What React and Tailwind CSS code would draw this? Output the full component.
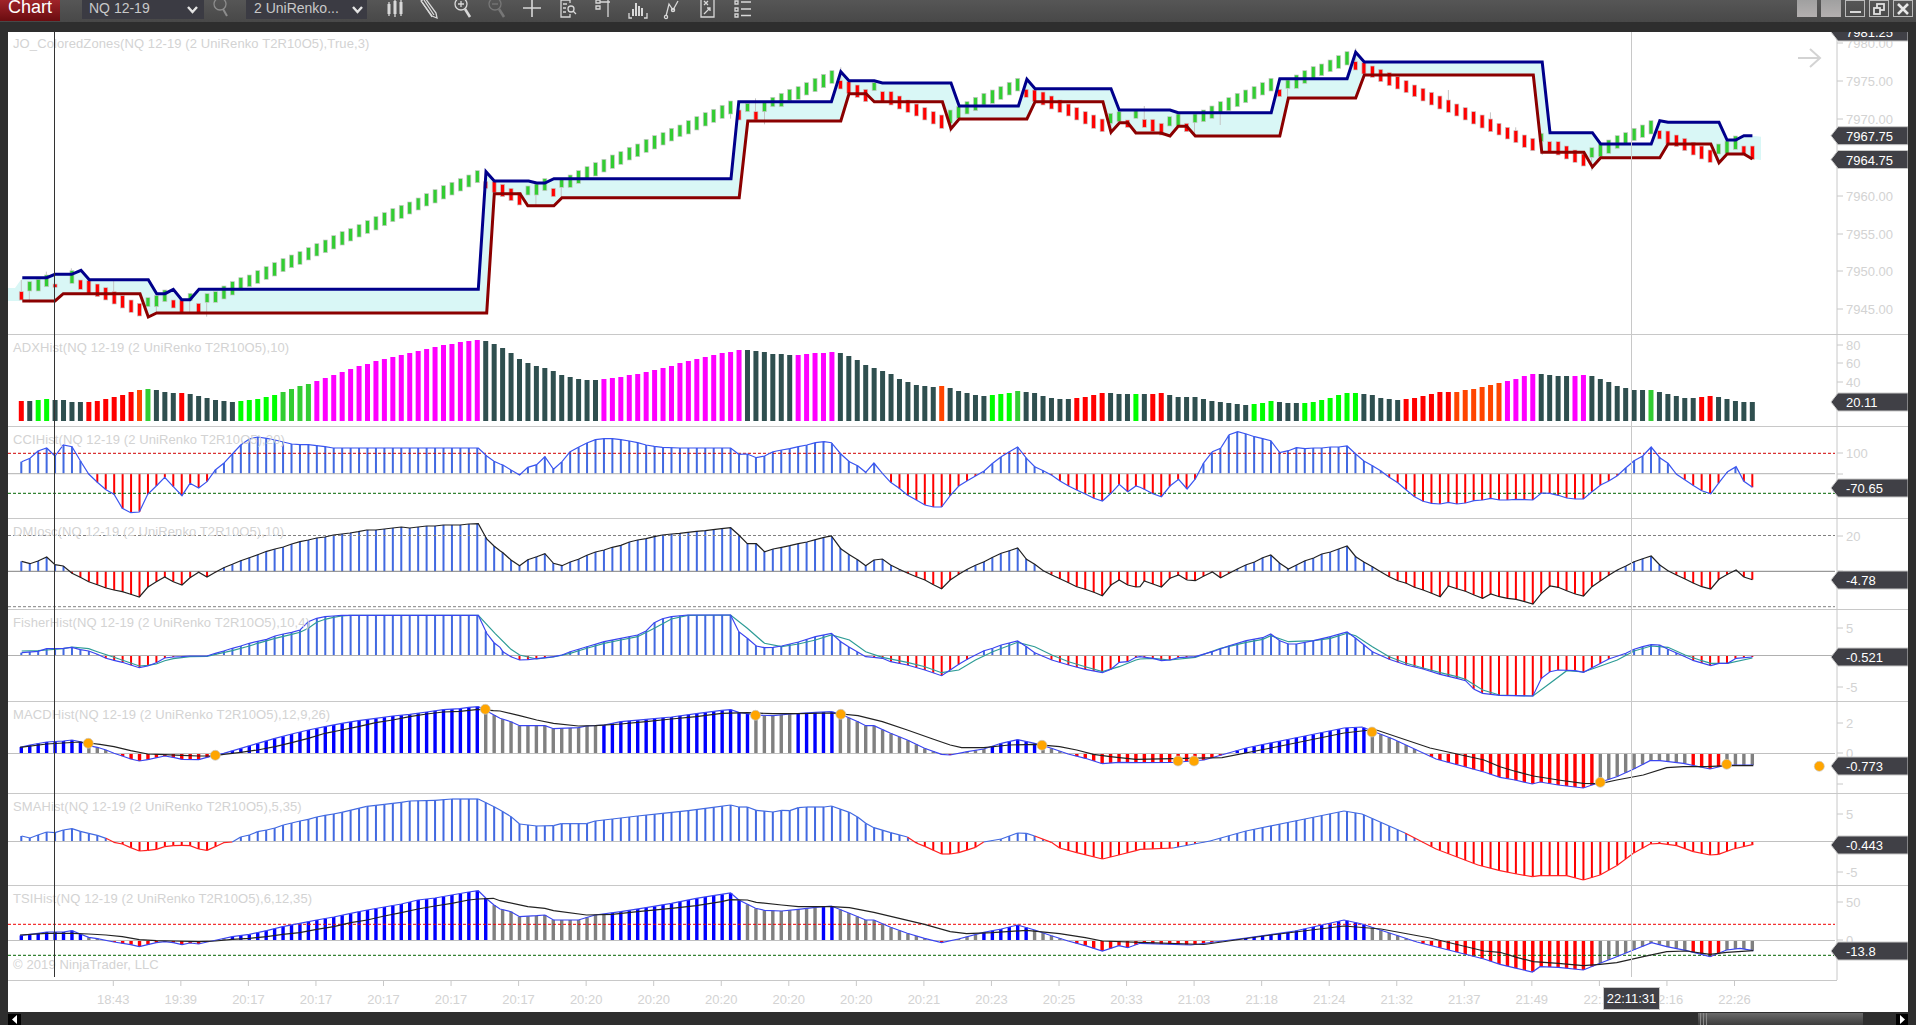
import React from "react";

// crop helpers: the reference crops have different scales, points get converted to page coords
const at = (ox, oy, sx, sy) => (s) =>
  s.trim().split(/\s+/).map((p) => {
    const [x, y] = p.split(",").map(Number);
    return [ox + x / sx, oy + y / sy];
  });
const stitch = (...segs) => {
  const out = [];
  segs.forEach((seg) => {
    seg.forEach((p) => {
      if (!out.length || p[0] > out[out.length - 1][0]) out.push(p);
    });
  });
  return out;
};
const line = (pts) => pts.map((p) => p[0].toFixed(1) + "," + p[1].toFixed(1)).join(" ");
const interp = (pts, x) => {
  if (x <= pts[0][0]) return pts[0][1];
  for (let i = 1; i < pts.length; i++) {
    if (x <= pts[i][0]) {
      const t = (x - pts[i - 1][0]) / (pts[i][0] - pts[i - 1][0]);
      return pts[i - 1][1] + t * (pts[i][1] - pts[i - 1][1]);
    }
  }
  return pts[pts.length - 1][1];
};
const barX = (i) => 21.3 + 8.444 * i;
const barIdx = (x) => Math.round((x - 21.3) / 8.444);
const BARS = Array.from({ length: 206 }, (_, i) => i);

const zA = at(0, 30, 3, 3);
const zB = at(500, 40, 2.45, 3);
const zC = at(1130, 40, 2.45, 3);
const zAdx = at(0, 250, 3, 3);
const zD = at(500, 330, 2.45, 3);
const zE = at(1130, 330, 2.45, 3);
const zDm = at(0, 510, 3, 3);
const zLow = at(0, 690, 3, 3);
const zMid = at(500, 695, 2.45, 3);
const zEnd = at(1500, 700, 3, 3);
const page = at(0, 0, 1, 1);

// main chart
const upper = stitch(
  zA("67,743 140,743 165,733 215,733 243,721 268,749 445,749 470,791 495,791 520,778 545,809 570,809 597,778 1435,778 1458,425 1483,453 1560,453"),
  zB("0,423 70,423 90,429 110,429 132,416 566,416 585,185 812,185 835,95 855,122 917,122 937,129 1105,129 1125,198 1270,198 1291,118 1311,146 1497,146 1517,210 1568,210"),
  zC("0,210 98,210 118,218 346,218 367,116 532,116 553,37 574,66 1010,66 1029,278 1133,278 1153,312 1277,312 1298,242 1318,247 1443,247 1463,300 1484,300 1504,287 1525,287")
);
const lower = stitch(
  zA("67,813 165,813 190,791 420,791 445,861 470,849 1460,849 1483,491 1560,491"),
  zB("0,461 48,461 68,497 132,497 152,473 586,473 607,243 835,243 855,161 897,161 917,185 1084,185 1105,266 1125,237 1291,237 1311,185 1477,185 1497,277 1518,248 1538,248 1558,279 1568,279"),
  zC("0,255 14,279 76,279 98,288 118,259 139,259 160,288 367,288 388,174 553,174 574,105 988,105 1009,337 1112,337 1133,381 1153,353 1298,353 1318,312 1423,312 1443,368 1463,342 1504,342 1525,357")
);
const zone = [[8, 288], [15, 288], ...upper, [1761, 136.7], [1761, 160], ...[...lower].reverse(), [8, 301]];

const parseCandles = (s, ox, oy, sx) =>
  s.trim().split(/\s+/).map((p) => {
    const [x, t, b] = p.slice(1).split(",").map(Number);
    return { i: barIdx(ox + x / sx), up: p[0] === "g", top: oy + t / 3, bot: oy + b / 3 };
  });
const candles = [
  ...parseCandles("r64,785,810 g88,755,783 g113,748,783 g139,735,770 r163,762,772 g214,722,760 r241,750,778 r265,752,790 r292,762,800 r316,773,810 r341,785,822 r367,797,834 r392,810,847 r418,820,858 g443,803,830 g469,797,830 g493,780,815 r520,810,834 r545,810,849 g569,790,812 r595,820,848 g620,791,817 g646,785,817 g671,768,807 g697,755,795 g722,743,780 g748,735,770 g773,722,760 g797,710,748 g823,698,738 g848,686,725 g874,675,713 g899,665,703 g925,653,690 g950,641,678 g976,630,668 g1001,617,657 g1025,605,645 g1052,596,633 g1075,584,621 g1102,572,610 g1127,560,600 g1153,548,587 g1178,536,575 g1204,526,565 g1229,516,552 g1254,504,540 g1280,491,528 g1303,479,519 g1330,467,507 g1355,457,495 g1381,446,483 g1406,435,471 g1432,422,458 r1458,455,475 r1481,455,487 r1507,463,500 r1531,475,512 r1557,488,525", 0, 30, 3),
  ...parseCandles("g65,438,465 g88,432,465 g108,416,452 r130,445,470 g150,418,442 g170,405,442 g192,392,430 g212,380,418 g233,368,408 g253,358,396 g275,345,385 g295,335,373 g317,322,360 g337,312,350 g357,298,337 g378,287,327 g398,278,315 g419,265,303 g440,255,290 g461,242,282 g481,230,270 g503,218,258 g522,208,247 g543,196,235 g564,183,222 r584,210,240 g606,190,215 r626,215,240 g648,187,215 g668,172,200 g690,160,200 g710,148,182 g730,140,178 g751,128,165 g771,115,155 g792,103,143 g812,92,130 r835,122,147 r855,125,160 r876,135,172 r897,148,185 g915,128,152 r937,155,187 r957,155,195 r978,168,207 r998,180,217 r1020,192,228 r1040,203,240 r1062,215,252 r1082,225,265 g1103,210,250 g1123,200,235 g1143,185,222 g1164,172,212 g1185,160,195 g1206,150,190 g1228,140,178 g1248,127,165 g1268,115,153 r1290,148,172 r1310,150,185 r1330,156,195 r1351,168,207 r1371,180,217 r1392,192,228 r1413,203,240 r1434,215,252 r1454,225,265 r1475,237,275 g1495,220,250 g1516,215,245 r1537,240,262", 500, 40, 2.45),
  ...parseCandles("g14,212,235 r35,238,262 r55,238,275 r76,250,285 g97,230,258 g118,222,258 r139,250,275 g158,222,248 g180,210,245 g200,198,235 g222,185,218 g241,173,212 g263,160,200 g283,150,188 g305,140,177 g325,128,165 g345,115,153 r366,148,170 g386,120,145 g407,105,145 g428,92,130 g449,80,115 g469,72,107 g491,60,95 g511,47,85 g531,35,75 r552,65,90 r573,68,102 r594,78,112 r614,88,125 r635,98,137 r655,110,147 r677,122,158 r697,135,170 r717,145,183 r738,157,195 r759,168,207 r780,180,217 r800,192,228 r821,203,240 r842,215,252 r863,225,264 r883,237,275 r903,250,285 r925,262,297 r945,272,308 r966,285,322 r986,295,332 g1008,280,305 r1028,305,335 r1049,305,345 r1069,318,357 r1089,330,367 r1110,342,378 g1131,323,352 g1152,312,350 g1172,300,340 g1193,287,325 g1214,278,312 g1235,265,302 g1255,255,292 g1275,242,282 r1297,272,297 r1317,273,312 r1338,285,320 r1358,295,332 r1380,307,345 r1400,318,357 r1421,330,367 g1441,312,342 g1462,303,340 g1483,288,328 r1504,318,345 r1525,318,358", 1130, 40, 2.45),
];
const wicks = [
  ...at(0, 30, 3, 3)("64,750 64,785 88,783 88,817 139,735 139,725 214,722 214,715 469,830 469,848 569,812 569,852 620,817 620,860 341,750 341,785"),
  ...at(500, 40, 2.45, 3)("88,465 88,495 150,442 150,473 648,215 648,253 626,175 626,215 1103,250 1103,278 835,82 835,122 1497,250 1497,287 565,222 565,236"),
  ...at(1130, 40, 2.45, 3)("35,198 35,238 221,218 221,255 780,150 780,180 883,217 883,237 158,248 158,288 386,145 386,170 1010,305 1010,345 553,25 553,65 1131,352 1131,392 945,262 945,272"),
];

// ADX bars
const ADX_COLORS = { r: "#ff0000", d: "#2f4f4f", l: "#00ff00", g: "#32cd32", m: "#ff00ff", o: "#ff4500" };
const parseAdx = (s, ox, oy, sx) =>
  s.trim().split(/\s+/).map((p) => {
    const [x, t] = p.slice(1).split(",").map(Number);
    return { i: barIdx(ox + x / sx), c: ADX_COLORS[p[0]], top: oy + t / 3 };
  });
const adx = [
  ...parseAdx("r64,453 d88,453 l113,450 l139,447 d163,450 d190,450 d214,456 d241,456 r265,456 r292,453 r316,447 r341,441 r367,435 r392,426 o418,420 g443,417 d469,420 d493,426 d520,429 r545,429 d569,432 d595,438 d620,444 d646,450 d671,453 d697,456 l722,453 l748,450 l773,447 l797,441 l823,435 g848,426 g874,417 g899,408 g925,402 m950,393 m976,384 m1001,375 m1025,366 m1052,357 m1075,348 m1102,342 m1127,333 m1153,327 m1178,321 m1204,315 m1229,309 m1254,303 m1280,297 m1303,291 m1330,285 m1355,282 m1381,276 m1406,273 m1432,270 d1456,273 d1481,282 d1507,294 d1531,309 d1557,327", 0, 250, 3),
  ...parseAdx("d67,99 d89,108 d109,114 d131,123 d151,135 d170,141 d192,147 d212,150 d233,150 m253,147 m275,144 m295,141 m317,135 m337,132 m357,126 m378,120 m398,114 m420,108 m440,99 m461,93 m481,87 m503,81 m522,75 m543,69 m565,66 m584,60 d606,60 d626,63 d648,66 d669,72 d690,72 d710,75 m730,75 m751,72 m771,69 m792,69 m812,66 d835,69 d855,78 d876,90 d896,105 d915,114 d937,123 d957,132 d978,147 d998,156 d1020,165 d1040,168 d1062,171 o1082,168 d1103,174 d1123,183 d1143,189 d1164,195 d1185,198 l1206,195 l1226,192 l1248,189 g1268,183 d1290,186 d1310,189 d1330,198 d1351,204 d1371,207 d1392,207 r1412,204 r1434,201 r1454,195 r1476,189 d1496,189 d1516,192 d1537,192 l1558,192", 500, 330, 2.45),
  ...parseAdx("d35,192 r55,192 r77,189 d97,195 d119,201 d139,201 d158,201 d180,207 d200,213 d222,216 d241,219 d263,222 d283,225 l305,222 l324,219 l344,213 d366,216 d386,219 d407,219 l428,219 l449,216 l469,210 l491,204 l511,195 l531,189 l552,189 d572,192 d594,195 d614,204 d636,207 d655,210 r677,207 r697,204 r717,198 r739,192 r759,186 r780,186 o800,186 o822,180 o842,177 o863,171 o883,165 o903,159 m925,153 m945,147 m966,138 m986,132 d1008,132 d1028,135 d1050,138 d1069,138 m1089,138 m1111,135 d1131,138 d1153,147 d1172,156 d1194,168 d1214,174 d1236,180 d1255,180 g1275,180 d1297,186 d1317,192 d1338,198 d1358,204 d1380,204 r1400,201 r1422,198 d1442,201 d1461,207 d1483,213 d1503,216 d1525,216", 1130, 330, 2.45),
];

const cci = stitch(
  zAdx("65,635 90,625 114,603 140,594 165,618 190,585 216,590 241,632 266,672 292,697 318,719 342,733 367,775 392,788 418,786 443,733 469,708 494,682 520,710 546,737 570,700 596,714 621,695 646,660 671,640 697,612 722,585 748,567 773,561 800,565 825,570 850,576 875,582 900,584 925,584 950,587 975,590 1000,594 1435,594 1460,618 1482,634 1500,642"),
  zD("7,405 27,420 48,435 68,412 90,404 110,380 131,418 152,395 172,365 192,352 213,339 234,329 255,326 275,326 296,329 317,333 337,338 358,345 378,349 398,352 440,354 565,354 585,373 606,372 628,383 648,378 669,365 690,360 710,356 731,350 752,345 773,338 794,335 812,338 835,372 856,395 877,408 896,427 916,399 937,430 957,457 978,475 998,495 1020,510 1041,525 1062,531 1082,531 1103,497 1124,468 1145,452 1165,438 1186,423 1207,400 1228,380 1248,365 1268,351 1290,385 1310,410 1331,422 1352,436 1372,453 1393,468 1413,480 1434,492 1455,505 1476,513 1497,490 1517,463 1538,485 1558,468 1568,472"),
  zE("35,478 56,491 77,500 98,468 119,448 140,477 160,447 181,398 202,365 222,355 243,314 264,305 285,312 305,320 325,326 345,332 367,368 388,362 408,353 429,356 450,354 470,354 491,351 511,351 532,348 553,372 573,393 594,407 614,422 635,442 656,458 677,480 697,500 718,514 739,520 760,522 780,517 801,522 822,519 843,512 864,510 884,505 905,510 925,510 946,508 967,509 987,510 1008,489 1029,490 1049,496 1070,504 1091,507 1111,507 1132,485 1153,465 1173,453 1194,437 1215,413 1235,392 1256,378 1277,351 1298,383 1318,400 1339,433 1360,450 1381,467 1401,482 1423,491 1443,458 1464,425 1485,410 1504,454 1525,472")
);
const dm = stitch(
  zDm("65,154 90,161 114,153 140,141 165,164 190,168 216,190 241,202 266,215 292,224 318,234 342,240 367,245 392,253 418,261 443,232 469,215 494,201 520,215 546,225 570,203 596,187 621,201 646,187 671,173 697,163 722,152 748,143 773,134 800,124 825,117 850,111 875,102 900,95 925,90 950,84 975,81 1000,75 1025,72 1050,69 1075,65 1100,60 1127,60 1153,57 1178,54 1204,51 1229,54 1254,51 1280,48 1305,48 1330,45 1380,45 1406,42 1435,41 1460,87 1482,108 1500,122"),
  zD("7,668 27,690 48,707 68,689 90,680 110,671 131,700 152,707 172,696 192,688 213,676 234,666 255,660 275,652 296,646 317,636 337,630 358,626 378,620 398,615 420,612 440,610 460,607 481,604 503,602 522,599 543,596 565,593 585,615 606,641 628,641 648,665 669,657 690,652 710,647 731,641 752,636 773,629 794,622 812,618 835,656 856,674 877,690 896,707 916,690 937,687 957,705 978,718 998,729 1020,740 1041,750 1062,764 1082,776 1103,750 1124,733 1145,718 1165,706 1186,695 1207,682 1228,670 1248,662 1268,654 1290,688 1310,703 1331,722 1352,735 1372,746 1393,758 1413,770 1434,778 1455,787 1476,797 1497,765 1517,750 1538,765 1558,771 1568,770"),
  zE("35,753 56,762 77,771 98,745 119,735 140,750 160,752 181,738 202,726 222,743 243,730 264,716 285,704 305,696 325,683 345,675 367,700 388,717 408,705 429,692 450,684 470,672 491,666 511,657 532,648 553,680 573,696 594,710 614,725 635,740 656,752 677,760 697,772 718,780 739,790 760,800 780,768 801,776 822,784 843,795 864,805 884,792 905,800 925,805 946,808 967,815 987,822 1008,790 1029,768 1049,772 1070,782 1091,792 1111,798 1132,770 1153,752 1173,736 1194,720 1215,708 1235,695 1256,686 1277,678 1298,705 1318,722 1339,735 1360,747 1381,760 1401,770 1423,777 1443,748 1464,733 1485,720 1504,741 1525,749")
);
const fisher = stitch(
  zDm("65,428 114,424 140,416 190,415 216,412 241,419 266,423 292,433 318,445 342,451 367,457 392,465 418,473 443,468 469,458 494,444 520,441 546,440 570,438 596,438 621,438 646,430 671,423 697,415 722,408 748,400 773,394 800,388 825,378 850,372 875,367 900,360 925,335 950,325 975,320 1000,318 1025,316 1435,316 1460,370 1482,398 1500,412"),
  zD("7,965 27,980 48,990 68,989 90,986 131,980 152,975 172,965 213,950 255,935 296,925 337,915 358,903 378,878 398,866 420,860 460,855 565,855 585,905 606,925 628,948 648,953 669,952 690,948 731,936 773,920 812,910 835,935 856,952 877,967 896,980 916,982 937,985 957,995 998,1005 1041,1020 1082,1037 1103,1020 1124,1003 1145,988 1165,975 1186,962 1207,955 1228,945 1268,933 1290,950 1310,968 1352,990 1393,1005 1434,1018 1476,1028 1497,1018 1517,997 1538,995 1558,982 1568,980"),
  zE("56,985 77,992 98,990 119,983 160,980 202,965 243,947 285,932 325,923 345,912 367,932 388,942 408,942 450,932 491,920 532,906 553,925 594,965 635,988 677,1005 718,1017 760,1033 801,1045 822,1052 843,1078 864,1090 905,1096 987,1098 1008,1045 1029,1025 1049,1020 1091,1022 1111,1027 1153,1000 1173,987 1215,970 1235,958 1256,950 1277,944 1298,945 1318,958 1360,980 1381,992 1423,1007 1443,1000 1464,1000 1485,985 1525,981")
);
const fisherSig = stitch(
  zDm("65,423 114,422 140,420 190,416 216,411 266,416 292,425 342,442 392,459 418,468 443,466 469,462 494,452 520,446 570,440 621,439 646,433 697,422 748,408 773,400 825,385 875,373 900,367 925,355 950,337 975,328 1000,322 1025,318 1050,316 1435,316 1485,370"),
  zD("27,958 48,975 90,987 131,981 172,970 213,955 255,940 296,930 337,920 378,895 420,867 460,856 565,855 606,895 648,940 690,950 731,942 773,930 812,915 856,930 896,965 937,982 998,997 1041,1010 1082,1028 1124,1020 1165,990 1207,965 1268,937 1310,950 1352,975 1393,995 1434,1010 1476,1025 1517,1010 1558,990 1568,987"),
  zE("56,985 98,990 160,982 222,955 285,937 325,928 345,917 388,935 450,932 491,925 532,910 553,917 594,950 635,980 677,1000 718,1014 760,1028 801,1040 822,1048 864,1080 905,1095 987,1098 1029,1060 1070,1022 1111,1026 1153,1008 1194,990 1235,963 1277,948 1318,952 1360,975 1401,992 1423,1000 1464,1000 1525,984")
);
const macd = stitch(
  zLow("60,172 90,165 140,156 190,153 216,150 241,155 266,167 292,172 318,180 342,190 367,198 392,207 418,213 443,209 494,198 520,202 546,208 596,209 640,197 671,190 722,175 773,160 825,145 875,132 925,120 975,110 1025,100 1075,92 1127,85 1178,78 1229,73 1280,66 1330,59 1380,56 1406,52 1435,50 1455,60 1482,75 1500,85"),
  zMid("27,80 48,92 110,92 131,101 192,98 212,93 255,90 296,80 358,73 420,66 481,56 543,46 565,44 585,52 626,60 669,62 712,57 773,52 812,50 835,58 877,80 896,92 916,92 957,115 998,135 1040,160 1082,178 1103,180 1145,170 1185,162 1228,145 1268,134 1310,145 1351,160 1392,177 1434,190 1476,206 1516,202 1558,203"),
  page("1173,762.5 1204,760 1246,748 1295,738 1344,728 1362,727 1393,739 1436,759 1484,772"),
  zEnd("0,232 45,240 97,252 120,246 175,255 250,264 300,247 350,230 400,208 450,182 480,182 550,190 630,207 680,195 760,195")
);
const macdSig = stitch(
  zLow("60,172 140,162 190,159 240,156 266,159 300,163 342,170 392,182 443,192 494,194 546,196 596,198 640,198 671,193 722,187 773,180 825,170 875,158 925,145 975,130 1025,120 1075,110 1127,98 1178,90 1229,80 1280,72 1330,66 1380,64 1435,58 1480,62"),
  zMid("0,48 48,62 90,75 131,85 192,93 233,92 296,87 358,80 420,72 481,65 543,55 606,53 669,56 731,56 812,54 877,62 937,80 998,105 1062,133 1103,150 1131,158 1185,158 1248,150 1310,148 1371,155 1413,165 1454,178 1495,185 1558,193"),
  page("1222,757.6 1271,748 1344,733 1375,729.5 1430,748 1484,760"),
  zEnd("0,200 50,215 100,228 175,240 250,250 300,251 350,240 430,225 500,203 550,200 620,200 680,197 760,197")
);
const sma = stitch(
  zLow("65,438 90,444 114,435 140,426 165,428 190,420 216,416 241,424 266,430 292,436 318,445 342,457 367,462 392,473 418,483 443,481 469,478 494,470 520,467 546,466 570,467 596,477 621,481 646,470 671,458 697,456 722,441 748,435 773,425 800,420 825,414 850,405 875,399 900,393 925,388 950,381 975,376 1000,372 1025,367 1050,361 1075,355 1100,349 1127,346 1153,343 1178,340 1204,337 1229,333 1305,331 1355,327 1435,327 1458,338 1482,350 1500,360"),
  zMid("27,365 48,387 90,393 131,392 150,386 212,386 233,378 275,372 337,363 398,355 461,347 522,337 565,330 585,336 606,336 628,346 669,351 690,346 710,347 731,338 752,336 794,336 812,333 856,352 877,367 896,385 916,398 957,413 998,426 1020,444 1041,454 1082,477 1103,477 1124,473 1165,457 1185,441 1228,432 1268,414 1290,415 1310,423 1351,442 1371,459 1413,473 1476,492 1516,480 1558,467 1568,463"),
  page("1173,848 1210,841 1246,831 1295,821 1344,811 1362,814 1405,833 1436,849 1478,865"),
  zEnd("0,512 50,522 97,530 120,527 200,527 250,540 300,525 350,497 400,460 450,432 480,430 530,437 580,455 630,465 655,463 700,447 760,433")
);
const tsi = stitch(
  zLow("60,737 114,730 140,726 190,726 216,722 241,732 266,742 292,746 342,756 392,764 418,770 443,764 469,758 494,755 520,758 546,764 570,759 596,762 621,756 650,750 697,740 748,733 800,722 848,710 899,700 950,690 1001,681 1052,670 1102,660 1153,651 1204,642 1254,630 1305,624 1355,615 1406,606 1435,602 1458,625 1482,645 1500,657"),
  zMid("27,650 48,665 90,662 110,660 131,675 192,675 233,660 296,650 358,638 420,625 481,610 522,602 565,594 585,615 626,640 648,646 690,648 731,643 773,637 812,633 856,655 896,675 916,675 957,697 998,715 1040,730 1082,743 1123,732 1185,712 1228,702 1268,690 1310,705 1351,722 1392,738 1434,752 1476,768 1516,752 1538,758 1568,745"),
  page("1191,945 1246,938 1295,931 1344,920 1362,924 1417,942 1484,959"),
  zEnd("0,793 50,805 97,816 120,800 175,802 250,810 300,790 350,770 400,750 455,728 500,740 560,752 630,770 680,750 720,745 760,752")
);
const tsiSig = stitch(
  zLow("60,735 140,730 216,730 266,732 318,735 367,740 418,749 469,752 520,753 596,755 646,753 697,748 748,745 800,740 848,733 899,728 950,718 1001,710 1052,698 1102,690 1153,678 1204,668 1254,657 1305,648 1355,640 1406,630 1435,627 1480,625"),
  zMid("0,617 68,635 110,640 131,647 212,660 275,658 337,650 420,640 481,632 543,620 564,614 606,615 628,622 690,630 731,635 812,635 856,638 916,652 978,670 1040,688 1103,710 1143,716 1206,713 1290,706 1371,716 1434,728 1476,738 1568,742"),
  page("1204,944.5 1271,935 1344,926 1381,929 1430,938 1484,951"),
  zEnd("0,757 50,772 100,785 175,790 250,797 300,793 350,788 430,770 500,755 560,753 630,763 680,757 760,752")
);

const inRange = (i, ranges) => ranges.some(([a, b]) => i >= a && i <= b);
const GRAY_NEG = [[187, 197], [202, 205]];
const macdColor = (blue) => (i, y, base) => {
  if (y > base) return inRange(i, GRAY_NEG) ? "#808080" : "#ff0000";
  return inRange(i, blue) ? "#0000ff" : "#808080";
};
const plainColor = (i, y, base) => (y > base ? "#ff0000" : "#4169e1");

const macdDots = [[88.3, 743.3], [215.3, 755.3], [485.3, 709.3], [755.5, 715.3], [840.8, 714.3], [1042, 745.3], [1178, 761], [1194, 761], [1372, 732], [1600.3, 782.3], [1726.7, 764.3], [1819.3, 766.3]];

function Hist({ pts, base, w, color }) {
  return (
    <>
      {BARS.map((i) => {
        const x = barX(i);
        const y = interp(pts, x);
        return (
          <rect
            key={i}
            x={x - w / 2}
            y={Math.min(y, base)}
            width={w}
            height={Math.abs(y - base)}
            fill={color(i, y, base)}
          />
        );
      })}
    </>
  );
}

function Poly({ pts, color, width = 1.2 }) {
  return <polyline points={line(pts)} fill="none" stroke={color} strokeWidth={width} strokeLinejoin="miter" />;
}

function HLine({ y, color, dash }) {
  return <line x1="8" x2="1835" y1={y} y2={y} stroke={color} strokeWidth="1" strokeDasharray={dash ? "3 2" : undefined} />;
}

// right hand scale: ticks, labels and the dark price flags
function Scale({ top, bottom, ticks, flags }) {
  return (
    <>
      <line x1="1837" x2="1837" y1={top} y2={bottom} stroke="#c8c8c8" />
      {ticks.map(([y, label]) => (
        <g key={y}>
          <line x1="1837" x2="1843" y1={y} y2={y} stroke="#c8c8c8" />
          {label && (
            <text x="1846" y={y + 5} fontSize="13" fill="#d3d3d3">
              {label}
            </text>
          )}
        </g>
      ))}
      {flags.map(([y, label]) => (
        <g key={label}>
          <polygon
            points={`1831,${y} 1838,${y - 9} 1908,${y - 9} 1908,${y + 9} 1838,${y + 9}`}
            fill="#404046"
            stroke="#c8c8c8"
          />
          <text x="1846" y={y + 5} fontSize="13" fill="#ffffff">
            {label}
          </text>
        </g>
      ))}
    </>
  );
}

function Panel({ className, top, height, title, ticks, flags, children }) {
  return (
    <div className={"relative border-t border-[#c8c8c8] " + className}>
      <svg className="block" width="1900" height={height - 1} viewBox={`8 ${top + 1} 1900 ${height - 1}`}>
        {children}
        <Scale top={top + 1} bottom={top + height} ticks={ticks} flags={flags} />
      </svg>
      <span className="absolute left-[5px] top-[5px] text-[13px] leading-[15px] tracking-[0.1px] text-[#d3d3d3]">{title}</span>
    </div>
  );
}

const ic = { fill: "none", stroke: "#d8d8d8", strokeWidth: 1.3 };
function Icon({ x, children }) {
  return (
    <svg className={"shrink-0 " + x} width="20" height="20" viewBox="0 0 20 20" {...ic}>
      {children}
    </svg>
  );
}

const timeLabels = ["18:43", "19:39", "20:17", "20:17", "20:17", "20:17", "20:17", "20:20", "20:20", "20:20", "20:20", "20:20", "20:21", "20:23", "20:25", "20:33", "21:03", "21:18", "21:24", "21:32", "21:37", "21:49", "22:11", "22:16", "22:26"];

export default function App() {
  return (
    <div className="flex h-[1025px] w-[1916px] flex-col overflow-hidden bg-[#2e2e2e] [font-family:'Liberation_Sans',Arial,sans-serif]">
      {/* toolbar */}
      <div className="flex h-[22px] shrink-0 items-start overflow-hidden bg-gradient-to-b from-[#565656] to-[#484848]">
        <div className="h-[21px] w-[60px] shrink-0 bg-gradient-to-b from-[#a0242a] to-[#6a0c10] pl-[8px] text-[18px] leading-[15px] text-white">
          Chart
        </div>
        <div className="ml-[22px] flex h-[19px] w-[122px] shrink-0 items-center justify-between bg-[#3b3b43] pl-[7px] pr-[6px] text-[14px] leading-[15px] text-[#c8c8c8]">
          <span className="-mt-[2px]">NQ 12-19</span>
          <svg width="11" height="8" viewBox="0 0 11 8" fill="none" stroke="#e4e4e4" strokeWidth="2.4"><path d="M1 1l4.5 5L10 1" /></svg>
        </div>
        <svg className="ml-[8px] shrink-0" width="18" height="18" viewBox="0 0 18 18" fill="none" stroke="#8c8c8c" strokeWidth="1.3">
          <circle cx="8" cy="4" r="6" />
          <path d="M11 9l4 7" strokeWidth="2" />
        </svg>
        <div className="ml-[16px] flex h-[19px] w-[121px] shrink-0 items-center justify-between bg-[#3b3b43] pl-[8px] pr-[4px] text-[14px] leading-[15px] text-[#c8c8c8]">
          <span className="-mt-[2px]">2 UniRenko...</span>
          <svg width="11" height="8" viewBox="0 0 11 8" fill="none" stroke="#e4e4e4" strokeWidth="2.4"><path d="M1 1l4.5 5L10 1" /></svg>
        </div>
        <Icon x="ml-[18px]">
          <path d="M4 2v14M10 0v17M16 0v16" />
          <rect x="2.5" y="4" width="3" height="10" fill="#d8d8d8" stroke="none" />
          <rect x="8.5" y="1" width="3" height="13" fill="#d8d8d8" stroke="none" />
          <rect x="14.5" y="2" width="3" height="12" fill="#d8d8d8" stroke="none" />
        </Icon>
        <Icon x="ml-[13px]">
          <path d="M3 1l4-3 11 15 1 5-5-2z" />
          <path d="M6 0l10 15M4 2l10 15" />
        </Icon>
        <Icon x="ml-[15px]">
          <circle cx="8" cy="4" r="6" />
          <path d="M5 4h6M8 1v6" />
          <path d="M12 9l5 8" strokeWidth="2.6" />
        </Icon>
        <Icon x="ml-[14px]">
          <g stroke="#777">
            <circle cx="8" cy="4" r="6" />
            <path d="M5 4h6" />
            <path d="M12 9l5 8" strokeWidth="2.6" />
          </g>
        </Icon>
        <Icon x="ml-[15px]">
          <path d="M10 0v17M1 8h18" strokeWidth="1.6" />
        </Icon>
        <Icon x="ml-[16px]">
          <path d="M3 0h9v3M12 14v3H3V0M5 4h4M5 8h3M5 12h3" />
          <circle cx="13" cy="9" r="3" />
          <path d="M15 11l3 3" />
        </Icon>
        <Icon x="ml-[16px]">
          <path d="M2 0h4v3H2zM2 6h4v3H2zM6 2h10M14 0v17" />
        </Icon>
        <Icon x="ml-[14px]">
          <path d="M5 16V9M8 16V3M11 16V6M14 16V8" strokeWidth="2" />
          <path d="M1 13v5h3M19 13v5h-3" />
        </Icon>
        <Icon x="ml-[14px]">
          <path d="M4 16L7 4l4 6 5-9" />
          <circle cx="4" cy="17" r="1.6" />
          <circle cx="11" cy="10" r="1.6" />
        </Icon>
        <Icon x="ml-[16px]">
          <path d="M3 0v17h13V0" />
          <path d="M6 1l4 4M10 1L6 5M6 14l6-6M9 8h3v3" />
        </Icon>
        <Icon x="ml-[15px]">
          <path d="M2 1h3v3H2zM2 8h3v3H2zM2 14h3v3H2zM8 9h10M8 15.500h10M8 2h10" />
        </Icon>
        <div className="ml-auto flex shrink-0 items-start">
          <div className="h-[17px] w-[20px] bg-gradient-to-b from-[#a0a0a0] to-[#b4b0b0]" />
          <div className="ml-[4px] h-[17px] w-[20px] bg-gradient-to-b from-[#a0a0a0] to-[#b4b0b0]" />
          <div className="ml-[4px] flex h-[17px] w-[20px] items-end justify-center border border-[#bbb] pb-[3px]">
            <div className="h-[2px] w-[11px] bg-[#d8d8d8]" />
          </div>
          <div className="ml-[4px] flex h-[17px] w-[20px] items-center justify-center border border-[#bbb]">
            <svg width="12" height="12" viewBox="0 0 12 12" fill="none" stroke="#e0e0e0" strokeWidth="1.8">
              <rect x="4" y="1" width="7" height="6" />
              <rect x="1" y="5" width="6" height="6" fill="#4a4a4a" />
            </svg>
          </div>
          <div className="ml-[4px] mr-[3px] flex h-[17px] w-[20px] items-center justify-center border border-[#bbb]">
            <svg width="12" height="12" viewBox="0 0 12 12" fill="none" stroke="#e8e8e8" strokeWidth="2.6">
              <path d="M1 1l10 10M11 1L1 11" />
            </svg>
          </div>
        </div>
      </div>

      <div className="h-[10px] shrink-0 bg-[#2e2e2e]" />

      {/* chart area */}
      <div className="relative ml-[8px] w-[1900px] shrink-0 bg-white">
        <div className="relative h-[302px]">
          <svg className="block" width="1900" height="302" viewBox="8 32 1900 302">
            <polygon points={line(zone)} fill="#d9f7f6" />
            {wicks.map((p, k) =>
              k % 2 === 0 ? (
                <line key={k} x1={p[0]} x2={p[0]} y1={p[1]} y2={wicks[k + 1][1]} stroke="#c4c4c4" />
              ) : null
            )}
            {candles.map((c, k) => (
              <rect
                key={k}
                x={barX(c.i) - 2}
                y={c.top}
                width="4"
                height={c.bot - c.top}
                fill={c.up ? "#32cd32" : "#ff0000"}
                stroke="#c8c8c8"
                strokeWidth="0.7"
              />
            ))}
            <Poly pts={lower} color="#8b0000" width={3} />
            <Poly pts={upper} color="#00008b" width={3} />
            <path d="M1798 58h22M1810 49l10 9-10 9" fill="none" stroke="#d3d3d3" strokeWidth="2" />
            <Scale
              top={32}
              bottom={334}
              ticks={[[43, "7980.00"], [81, "7975.00"], [119, "7970.00"], [158, null], [196, "7960.00"], [234, "7955.00"], [271, "7950.00"], [309, "7945.00"]]}
              flags={[[32, "7981.25"], [135.7, "7967.75"], [159.5, "7964.75"]]}
            />
          </svg>
          <span className="absolute left-[5px] top-[4px] text-[13px] leading-[15px] tracking-[0.1px] text-[#d3d3d3]">
            JO_ColoredZones(NQ 12-19 (2 UniRenko T2R10O5),True,3)
          </span>
        </div>

        <Panel
          className="h-[92px]"
          top={334}
          height={92}
          title="ADXHist(NQ 12-19 (2 UniRenko T2R10O5),10)"
          ticks={[[345, "80"], [363, "60"], [382, "40"]]}
          flags={[[402, "20.11"]]}
        >
          {adx.map((b, k) => (
            <rect key={k} x={barX(b.i) - 2.5} y={b.top} width="5" height={421 - b.top} fill={b.c} />
          ))}
        </Panel>

        <Panel
          className="h-[92px]"
          top={426}
          height={92}
          title="CCIHist(NQ 12-19 (2 UniRenko T2R10O5),20)"
          ticks={[[453, "100"], [474, null], [493, null]]}
          flags={[[488, "-70.65"]]}
        >
          <Hist pts={cci} base={473.7} w={2} color={plainColor} />
          <HLine y={473.7} color="#b0b0b0" />
          <HLine y={453.3} color="#d00000" dash />
          <HLine y={493.3} color="#006400" dash />
          <Poly pts={cci} color="#3a55f0" />
        </Panel>

        <Panel
          className="h-[91px]"
          top={518}
          height={91}
          title="DMIosc(NQ 12-19 (2 UniRenko T2R10O5),10)"
          ticks={[[536, "20"], [571, null]]}
          flags={[[580, "-4.78"]]}
        >
          <Hist pts={dm} base={571.3} w={2} color={plainColor} />
          <HLine y={571.3} color="#808080" />
          <HLine y={535.5} color="#808080" dash />
          <HLine y={606.7} color="#808080" dash />
          <Poly pts={dm} color="#222222" />
        </Panel>

        <Panel
          className="h-[92px]"
          top={609}
          height={92}
          title="FisherHist(NQ 12-19 (2 UniRenko T2R10O5),10,4)"
          ticks={[[628, "5"], [656, null], [687, "-5"]]}
          flags={[[657, "-0.521"]]}
        >
          <Hist pts={fisher} base={655.5} w={2} color={plainColor} />
          <HLine y={655.5} color="#b0b0b0" />
          <Poly pts={fisherSig} color="#2e9c96" />
          <Poly pts={fisher} color="#3a45f0" />
        </Panel>

        <Panel
          className="h-[92px]"
          top={701}
          height={92}
          title="MACDHist(NQ 12-19 (2 UniRenko T2R10O5),12,9,26)"
          ticks={[[723, "2"], [753, "0"], [784, null]]}
          flags={[[766, "-0.773"]]}
        >
          <Hist pts={macd} base={753.5} w={3.4} color={macdColor([[0, 7], [24, 54], [69, 86], [92, 96], [115, 120], [142, 159]])} />
          <HLine y={753.5} color="#c0c0c0" />
          <Poly pts={macd} color="#3a45f0" />
          <Poly pts={macdSig} color="#222222" />
          {macdDots.map((d) => (
            <circle key={d[0]} cx={d[0]} cy={d[1]} r="5" fill="#ffa500" stroke="#c8c8c8" strokeWidth="0.7" />
          ))}
        </Panel>

        <Panel
          className="h-[92px]"
          top={793}
          height={92}
          title="SMAHist(NQ 12-19 (2 UniRenko T2R10O5),5,35)"
          ticks={[[814, "5"], [842, null], [872, "-5"]]}
          flags={[[845, "-0.443"]]}
        >
          <Hist pts={sma} base={841.5} w={2} color={plainColor} />
          <HLine y={841.5} color="#c0c0c0" />
          {sma.slice(1).map((p, k) => (
            <line
              key={k}
              x1={sma[k][0]}
              y1={sma[k][1]}
              x2={p[0]}
              y2={p[1]}
              stroke={p[1] > 841.5 ? "#ff2020" : "#4169e1"}
              strokeWidth="1.2"
            />
          ))}
        </Panel>

        <Panel
          className="h-[95px]"
          top={885}
          height={95}
          title="TSIHist(NQ 12-19 (2 UniRenko T2R10O5),6,12,35)"
          ticks={[[902, "50"], [940, "0"]]}
          flags={[[951, "-13.8"]]}
        >
          <Hist pts={tsi} base={940.5} w={3.4} color={macdColor([[0, 7], [25, 55], [70, 85], [95, 96], [114, 119], [142, 159]])} />
          <HLine y={940.5} color="#c0c0c0" />
          <HLine y={924.3} color="#f00000" dash />
          <HLine y={955.3} color="#006400" dash />
          <Poly pts={tsi} color="#3a45f0" />
          <Poly pts={tsiSig} color="#222222" />
        </Panel>

        {/* time axis */}
        <div className="relative h-[32px]">
          <svg className="block" width="1900" height="32" viewBox="8 980 1900 32">
            <line x1="8" x2="1837" y1="980.5" y2="980.5" stroke="#c8c8c8" />
            {timeLabels.map((t, k) => {
              const x = 113.3 + 67.55 * k;
              return (
                <g key={k}>
                  <line x1={x} x2={x} y1="980" y2="986" stroke="#c8c8c8" />
                  <text x={x} y="1004" fontSize="13" fill="#d3d3d3" textAnchor="middle">
                    {t}
                  </text>
                </g>
              );
            })}
          </svg>
          <div className="absolute left-[1595px] top-[7px] flex h-[23px] w-[57px] items-center justify-center border border-[#c8c8c8] bg-[#404046] text-[13px] text-white">
            22:11:31
          </div>
        </div>

        <span className="absolute left-[5px] top-[925px] text-[13px] leading-[15px] tracking-[0.1px] text-[#d3d3d3]">© 2019 NinjaTrader, LLC</span>

        {/* crosshair lines */}
        <div className="absolute left-[46px] top-0 h-[945px] w-px bg-[#333333]" />
        <div className="absolute left-[1623px] top-0 h-[945px] w-px bg-[#c8c8c8]" />
      </div>

      {/* scroll bar */}
      <div className="flex h-[13px] shrink-0 items-end bg-[#2e2e2e] pl-[8px] pr-[8px]">
        <div className="flex h-[11px] w-[13px] shrink-0 items-center justify-center bg-black">
          <svg width="6" height="9" viewBox="0 0 6 9"><path d="M5 0v9L0 4.500z" fill="#fff" /></svg>
        </div>
        <div className="relative ml-[1677px] flex h-[12px] w-[165px] shrink-0 gap-[2px] bg-gradient-to-b from-[#6a6a6a] to-[#3c3c3c] pl-[2px]">
          <div className="h-full w-px bg-[#888]" />
          <div className="h-full w-px bg-[#888]" />
          <div className="h-full w-px bg-[#888]" />
        </div>
        <div className="ml-auto flex h-[11px] w-[12px] shrink-0 items-center justify-center bg-black">
          <svg width="6" height="9" viewBox="0 0 6 9"><path d="M1 0v9l5-4.500z" fill="#fff" /></svg>
        </div>
      </div>
    </div>
  );
}
